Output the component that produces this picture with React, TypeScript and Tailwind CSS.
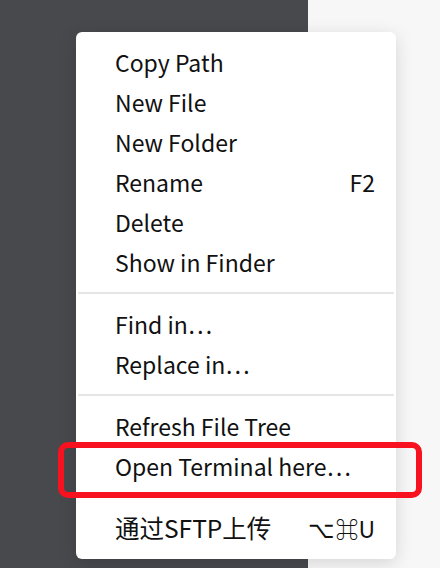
import React from "react";

type Item = { label: string; shortcut?: string; highlight?: boolean; cjk?: boolean } | "sep" | "hidden-sep";

const items: Item[] = [
  { label: "Copy Path" },
  { label: "New File" },
  { label: "New Folder" },
  { label: "Rename", shortcut: "F2" },
  { label: "Delete" },
  { label: "Show in Finder" },
  "sep",
  { label: "Find in…" },
  { label: "Replace in…" },
  "sep",
  { label: "Refresh File Tree" },
  { label: "Open Terminal here…", highlight: true },
  "hidden-sep",
  { label: "通过SFTP上传", shortcut: "⌥⌘U", cjk: true },
];

export default function App() {
  return (
    <div
      className="relative flex h-[568px] w-[440px] overflow-hidden"
      style={{ fontFamily: '"Noto Sans CJK SC", "Noto Sans", sans-serif' }}
    >
      <div className="h-full w-[308px] bg-[#48494d]" />
      <div className="h-full flex-1 bg-[#f7f7f7]" />

      {/* context menu */}
      <div className="absolute left-[76px] top-[32px] w-[320px] rounded-[6px] bg-white pt-[11px] pb-[10px] shadow-[0_4px_18px_rgba(0,0,0,0.14)]">
        {items.map((it, i) => {
          if (it === "sep" || it === "hidden-sep") {
            return (
              <div
                key={i}
                className={
                  "mx-[2px] mt-[9px] mb-[11px] h-[2px] " +
                  (it === "sep" ? "bg-[#e6e6e6]" : "bg-transparent")
                }
              />
            );
          }
          return (
            <div
              key={i}
              className="relative flex h-[40px] items-center justify-between pb-[2px] pl-[39px] pr-[21px] text-[23px] leading-none text-[#111]"
            >
              <span className={it.cjk ? "text-[24.5px]" : ""}>{it.label}</span>
              {it.shortcut && <span>{it.shortcut}</span>}
              {it.highlight && (
                <div className="pointer-events-none absolute -left-[18px] -right-[26px] -top-[5px] -bottom-[11px] z-10 rounded-[10px] border-[6px] border-[#f8121f]" />
              )}
            </div>
          );
        })}
      </div>
    </div>
  );
}
